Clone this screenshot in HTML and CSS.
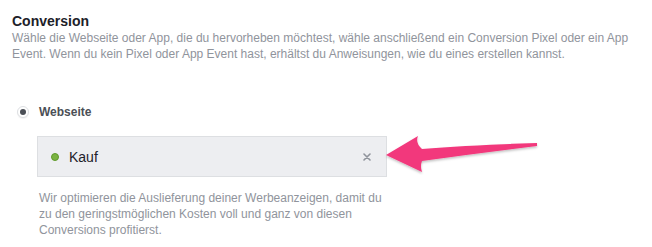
FILE: index.html
```html
<!DOCTYPE html>
<html lang="de">
<head>
    <meta charset="UTF-8">
    <meta name="viewport" content="width=device-width, initial-scale=1.0">
    <title>Conversion</title>
    <link rel="stylesheet" href="styles.css">
</head>
<body>
    <div class="section">
        <div class="section-title">Conversion</div>
        <div class="section-desc">Wähle die Webseite oder App, die du hervorheben möchtest, wähle anschließend ein Conversion Pixel oder ein App Event. Wenn du kein Pixel oder App Event hast, erhältst du Anweisungen, wie du eines erstellen kannst.</div>

        <label class="radio-row">
            <span class="radio"><span class="radio-dot"></span></span>
            <span class="radio-label">Webseite</span>
        </label>

        <div class="pixel-wrap">
            <div class="pixel-box">
                <span class="status-dot"></span>
                <span class="pixel-name">Kauf</span>
                <svg class="pixel-clear" width="8" height="8" viewBox="0 0 8 8">
                    <path d="M1 1 L7 7 M7 1 L1 7" stroke="#90949c" stroke-width="1.6" stroke-linecap="round"/>
                </svg>
            </div>
            <svg class="arrow" width="160" height="50" viewBox="0 0 160 50">
                <defs>
                    <filter id="shadow" x="-10%" y="-20%" width="120%" height="160%">
                        <feDropShadow dx="0" dy="1.5" stdDeviation="1.2" flood-color="#000" flood-opacity="0.25"/>
                    </filter>
                </defs>
                <!-- arrow origin is at page x=380, y=125 -->
                <path d="M7 30 L39 11 Q36 18 43 24 Q90 20 158 18 L158 21 Q100 28 43 36 Q41 41 43 47 Z" fill="#f2387c" filter="url(#shadow)"/>
            </svg>
        </div>

        <div class="pixel-note">Wir optimieren die Auslieferung deiner Werbeanzeigen, damit du zu den geringstmöglichen Kosten voll und ganz von diesen Conversions profitierst.</div>
    </div>
</body>
</html>
```

FILE: styles.css
```css
body {
    margin: 0;
    background-color: #ffffff;
    font-family: "Liberation Sans", Arial, sans-serif;
}

.section {
    padding: 12px 12px 0 12px;
}

.section-title {
    font-size: 14px;
    font-weight: bold;
    line-height: 18px;
    color: #1d2129;
}

.section-desc {
    font-size: 12px;
    line-height: 16px;
    color: #90949c;
}

.radio-row {
    display: flex;
    align-items: center;
    gap: 10px;
    margin-top: 42px;
    height: 16px;
    padding-left: 5px;
}

.radio {
    width: 10px;
    height: 10px;
    border: 1px solid #dddfe2;
    border-radius: 50%;
    background: #fff;
    display: flex;
    align-items: center;
    justify-content: center;
    box-shadow: 0 1px 1px rgba(0, 0, 0, 0.05);
}

.radio-dot {
    width: 6px;
    height: 6px;
    border-radius: 50%;
    background: #4b4f56;
}

.radio-label {
    font-size: 12px;
    font-weight: bold;
    color: #4b4f56;
}

.pixel-wrap {
    position: relative;
    margin-top: 16px;
    margin-left: 25px;
}

.pixel-box {
    width: 348px;
    height: 39px;
    display: flex;
    align-items: center;
    background: #edeef1;
    border: 1px solid #dddfe2;
}

.status-dot {
    width: 6px;
    height: 6px;
    margin-left: 13px;
    border-radius: 50%;
    background: #7bb342;
    border: 1px solid #5e9a2a;
}

.pixel-name {
    margin-left: 10px;
    font-size: 14px;
    color: #1d2129;
    flex: 1;
}

.pixel-clear {
    margin-right: 15px;
}

.arrow {
    position: absolute;
    left: 342px;
    top: -11px;
}

.pixel-note {
    width: 350px;
    margin-top: 13px;
    margin-left: 27px;
    font-size: 12px;
    line-height: 16px;
    color: #90949c;
}
```
